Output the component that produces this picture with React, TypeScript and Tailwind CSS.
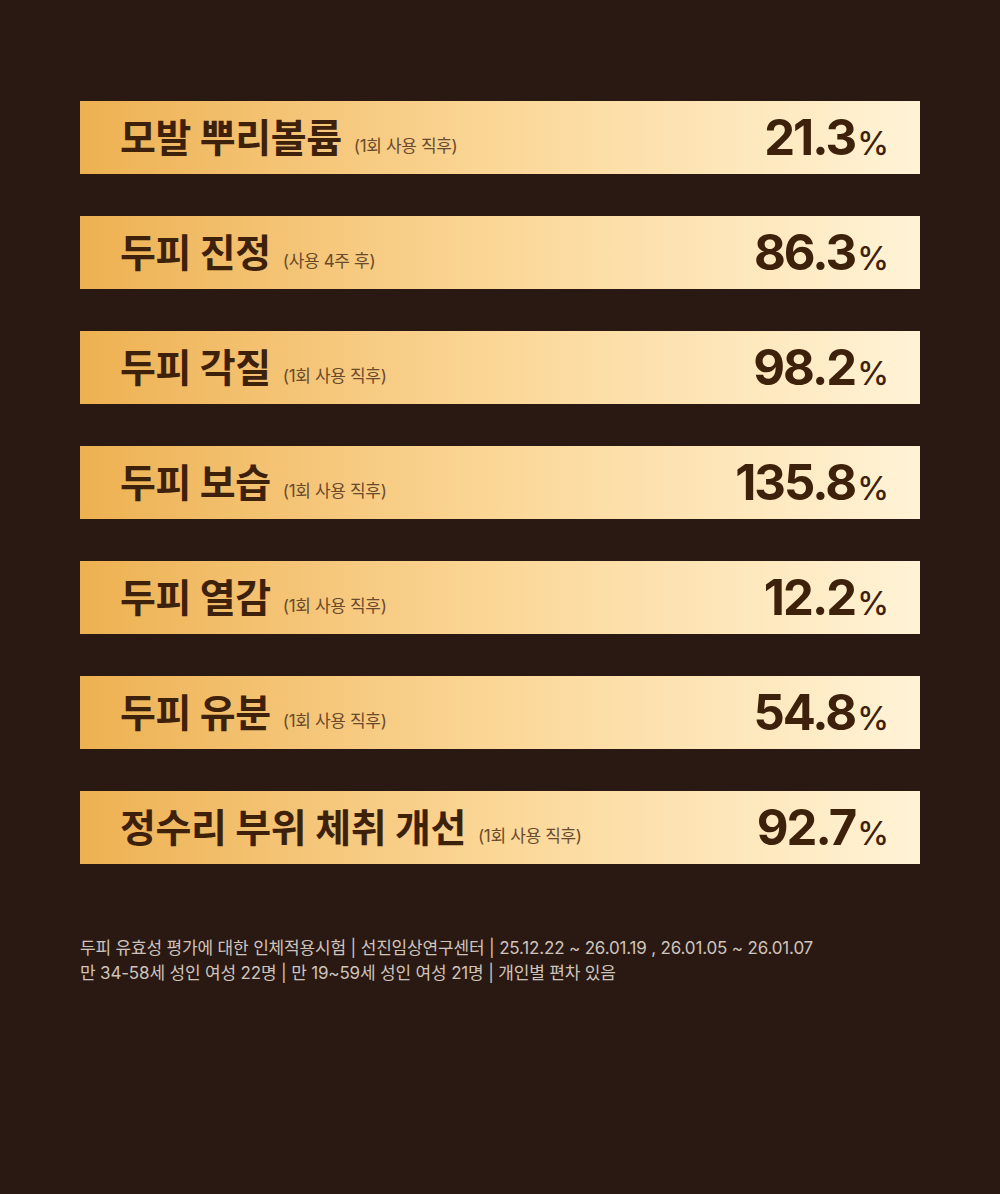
import React from 'react';

const rows = [
  { title: '모발 뿌리볼륨', note: '(1회 사용 직후)', value: '21.3' },
  { title: '두피 진정', note: '(사용 4주 후)', value: '86.3' },
  { title: '두피 각질', note: '(1회 사용 직후)', value: '98.2' },
  { title: '두피 보습', note: '(1회 사용 직후)', value: '135.8' },
  { title: '두피 열감', note: '(1회 사용 직후)', value: '12.2' },
  { title: '두피 유분', note: '(1회 사용 직후)', value: '54.8' },
  { title: '정수리 부위 체취 개선', note: '(1회 사용 직후)', value: '92.7' },
];

const font = { fontFamily: 'Inter, "Noto Sans CJK KR", sans-serif' };

const App = () => {
  return (
    <div className="min-h-[1194px] w-full bg-[#2a1913] px-[80px] pt-[101px]" style={font}>
      <div className="flex flex-col gap-[42px]">
        {rows.map((r) => (
          <div
            key={r.title}
            className="flex h-[73px] items-center justify-between bg-gradient-to-r from-[#edb150] via-[#fbd797] to-[#fff3d6] pl-[40px] pr-[31px] text-[#3e210b]"
          >
            <div className="flex items-baseline gap-[12px]">
              <span className="text-[39px] font-bold leading-none tracking-[-0.01em]">{r.title}</span>
              <span className="text-[17px] leading-none tracking-[-0.02em] text-[#6a4a2c]">{r.note}</span>
            </div>
            <div className="flex items-baseline">
              <span className="text-[49px] font-bold leading-none tracking-[-0.04em]">{r.value}</span>
              <span className="ml-[2px] text-[32px] font-medium leading-none">%</span>
            </div>
          </div>
        ))}
      </div>
      <div className="mt-[72px] text-[17px] leading-[25px] tracking-[-0.01em] text-[#cfc4bb]">
        <p>두피 유효성 평가에 대한 인체적용시험 | 선진임상연구센터 | 25.12.22 ~ 26.01.19 , 26.01.05 ~ 26.01.07</p>
        <p>만 34-58세 성인 여성 22명 | 만 19~59세 성인 여성 21명 | 개인별 편차 있음</p>
      </div>
    </div>
  );
};

export default App;
